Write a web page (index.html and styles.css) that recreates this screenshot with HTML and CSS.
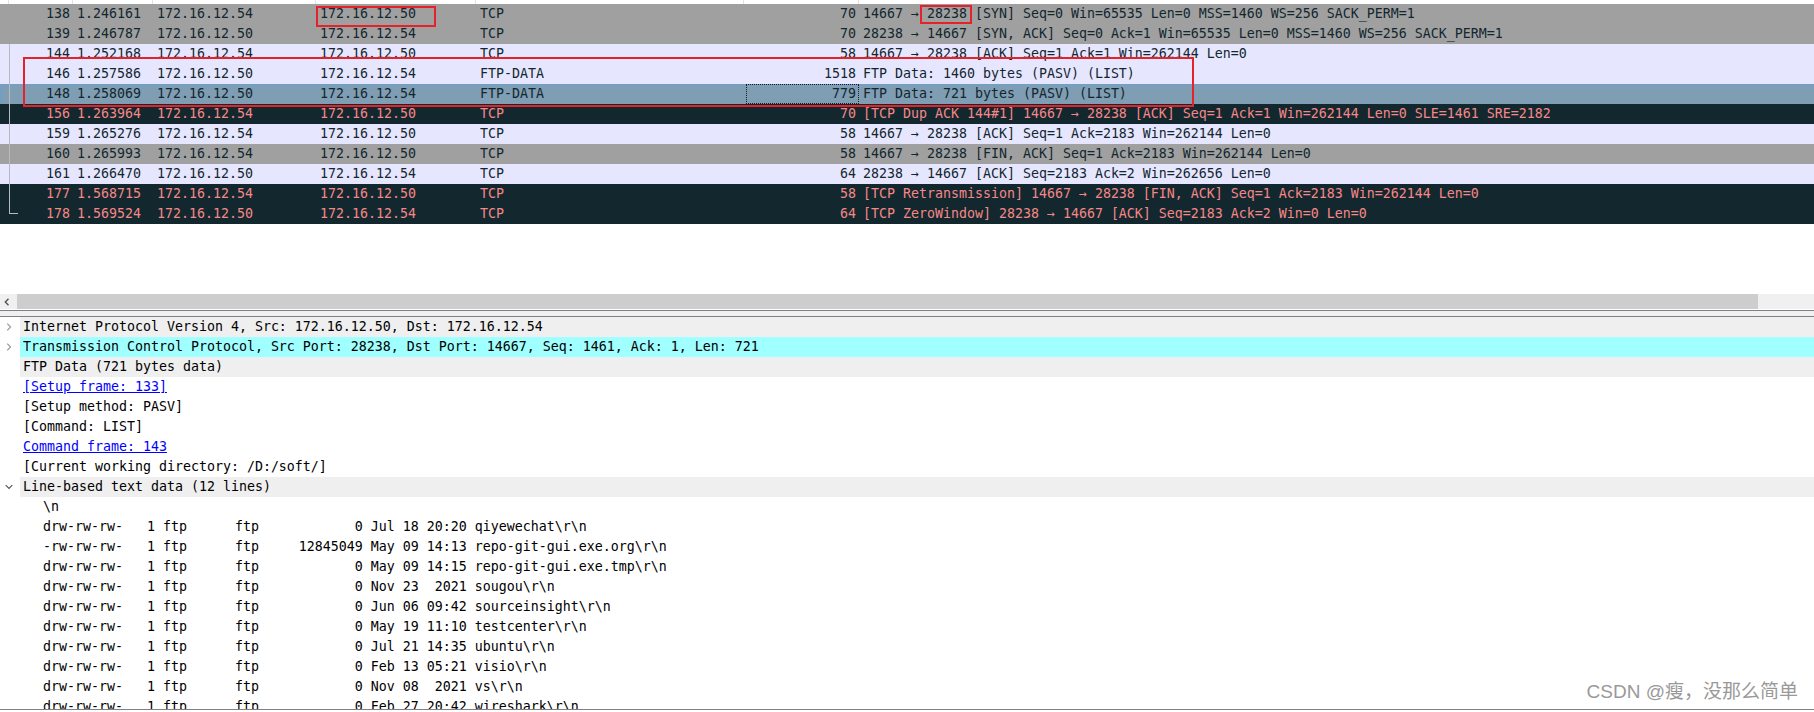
FILE: index.html
```html
<!DOCTYPE html>
<html>
<head>
<meta charset="utf-8">
<link rel="stylesheet" href="styles.css">
</head>
<body>
<div class="page">
  <div class="plist">
    <div class="phead"><span></span><span></span><span></span><span></span><span></span><span></span><span></span><span></span></div>
    <div class="prow gray"><span></span><span class="num">138</span><span>1.246161</span><span>172.16.12.54</span><span>172.16.12.50</span><span>TCP</span><span class="len">70</span><span>14667 → 28238 [SYN] Seq=0 Win=65535 Len=0 MSS=1460 WS=256 SACK_PERM=1</span></div>
    <div class="prow gray"><span></span><span class="num">139</span><span>1.246787</span><span>172.16.12.50</span><span>172.16.12.54</span><span>TCP</span><span class="len">70</span><span>28238 → 14667 [SYN, ACK] Seq=0 Ack=1 Win=65535 Len=0 MSS=1460 WS=256 SACK_PERM=1</span></div>
    <div class="prow lav"><span></span><span class="num">144</span><span>1.252168</span><span>172.16.12.54</span><span>172.16.12.50</span><span>TCP</span><span class="len">58</span><span>14667 → 28238 [ACK] Seq=1 Ack=1 Win=262144 Len=0</span></div>
    <div class="prow lav"><span></span><span class="num">146</span><span>1.257586</span><span>172.16.12.50</span><span>172.16.12.54</span><span>FTP-DATA</span><span class="len">1518</span><span>FTP Data: 1460 bytes (PASV) (LIST)</span></div>
    <div class="prow sel"><span></span><span class="num">148</span><span>1.258069</span><span>172.16.12.50</span><span>172.16.12.54</span><span>FTP-DATA</span><span class="len focus">779</span><span>FTP Data: 721 bytes (PASV) (LIST)</span></div>
    <div class="prow bad"><span></span><span class="num">156</span><span>1.263964</span><span>172.16.12.54</span><span>172.16.12.50</span><span>TCP</span><span class="len">70</span><span>[TCP Dup ACK 144#1] 14667 → 28238 [ACK] Seq=1 Ack=1 Win=262144 Len=0 SLE=1461 SRE=2182</span></div>
    <div class="prow lav"><span></span><span class="num">159</span><span>1.265276</span><span>172.16.12.54</span><span>172.16.12.50</span><span>TCP</span><span class="len">58</span><span>14667 → 28238 [ACK] Seq=1 Ack=2183 Win=262144 Len=0</span></div>
    <div class="prow gray"><span></span><span class="num">160</span><span>1.265993</span><span>172.16.12.54</span><span>172.16.12.50</span><span>TCP</span><span class="len">58</span><span>14667 → 28238 [FIN, ACK] Seq=1 Ack=2183 Win=262144 Len=0</span></div>
    <div class="prow lav"><span></span><span class="num">161</span><span>1.266470</span><span>172.16.12.50</span><span>172.16.12.54</span><span>TCP</span><span class="len">64</span><span>28238 → 14667 [ACK] Seq=2183 Ack=2 Win=262656 Len=0</span></div>
    <div class="prow bad"><span></span><span class="num">177</span><span>1.568715</span><span>172.16.12.54</span><span>172.16.12.50</span><span>TCP</span><span class="len">58</span><span>[TCP Retransmission] 14667 → 28238 [FIN, ACK] Seq=1 Ack=2183 Win=262144 Len=0</span></div>
    <div class="prow bad"><span></span><span class="num">178</span><span>1.569524</span><span>172.16.12.50</span><span>172.16.12.54</span><span>TCP</span><span class="len">64</span><span>[TCP ZeroWindow] 28238 → 14667 [ACK] Seq=2183 Ack=2 Win=0 Len=0</span></div>
    <div class="rel-v"></div>
    <div class="rel-h"></div>
  </div>

  <div class="hscroll">
    <div class="sarrow"><svg width="6" height="8" viewBox="0 0 6 8"><path d="M4.5 0.7 L1.3 4 L4.5 7.3" fill="none" stroke="#555" stroke-width="1.4"/></svg></div>
    <div class="sthumb"></div>
    <div class="strack"></div>
  </div>
  <div class="sgap"></div>
  <div class="split"></div>

  <div class="dpane">
    <div class="drow top"><span class="exp"><svg width="6" height="8" viewBox="0 0 6 8"><path d="M1.3 0.7 L4.5 4 L1.3 7.3" fill="none" stroke="#9a9a9a" stroke-width="1.2"/></svg></span><span class="dtxt">Internet Protocol Version 4, Src: 172.16.12.50, Dst: 172.16.12.54</span></div>
    <div class="drow top cyan"><span class="exp"><svg width="6" height="8" viewBox="0 0 6 8"><path d="M1.3 0.7 L4.5 4 L1.3 7.3" fill="none" stroke="#9a9a9a" stroke-width="1.2"/></svg></span><span class="dtxt">Transmission Control Protocol, Src Port: 28238, Dst Port: 14667, Seq: 1461, Ack: 1, Len: 721</span></div>
    <div class="drow top"><span class="exp"></span><span class="dtxt">FTP Data (721 bytes data)</span></div>
    <div class="drow"><span class="exp"></span><span class="dtxt"><a class="lnk">[Setup frame: 133]</a></span></div>
    <div class="drow"><span class="exp"></span><span class="dtxt">[Setup method: PASV]</span></div>
    <div class="drow"><span class="exp"></span><span class="dtxt">[Command: LIST]</span></div>
    <div class="drow"><span class="exp"></span><span class="dtxt"><a class="lnk">Command frame: 143</a></span></div>
    <div class="drow"><span class="exp"></span><span class="dtxt">[Current working directory: /D:/soft/]</span></div>
    <div class="drow top"><span class="exp"><svg width="8" height="6" viewBox="0 0 8 6"><path d="M0.7 1.2 L4 4.5 L7.3 1.2" fill="none" stroke="#555" stroke-width="1.2"/></svg></span><span class="dtxt">Line-based text data (12 lines)</span></div>
    <div class="drow sub"><span class="exp"></span><span class="dtxt">\n</span></div>
    <div class="drow sub"><span class="exp"></span><span class="dtxt">drw-rw-rw-   1 ftp      ftp            0 Jul 18 20:20 qiyewechat\r\n</span></div>
    <div class="drow sub"><span class="exp"></span><span class="dtxt">-rw-rw-rw-   1 ftp      ftp     12845049 May 09 14:13 repo-git-gui.exe.org\r\n</span></div>
    <div class="drow sub"><span class="exp"></span><span class="dtxt">drw-rw-rw-   1 ftp      ftp            0 May 09 14:15 repo-git-gui.exe.tmp\r\n</span></div>
    <div class="drow sub"><span class="exp"></span><span class="dtxt">drw-rw-rw-   1 ftp      ftp            0 Nov 23  2021 sougou\r\n</span></div>
    <div class="drow sub"><span class="exp"></span><span class="dtxt">drw-rw-rw-   1 ftp      ftp            0 Jun 06 09:42 sourceinsight\r\n</span></div>
    <div class="drow sub"><span class="exp"></span><span class="dtxt">drw-rw-rw-   1 ftp      ftp            0 May 19 11:10 testcenter\r\n</span></div>
    <div class="drow sub"><span class="exp"></span><span class="dtxt">drw-rw-rw-   1 ftp      ftp            0 Jul 21 14:35 ubuntu\r\n</span></div>
    <div class="drow sub"><span class="exp"></span><span class="dtxt">drw-rw-rw-   1 ftp      ftp            0 Feb 13 05:21 visio\r\n</span></div>
    <div class="drow sub"><span class="exp"></span><span class="dtxt">drw-rw-rw-   1 ftp      ftp            0 Nov 08  2021 vs\r\n</span></div>
    <div class="drow sub"><span class="exp"></span><span class="dtxt">drw-rw-rw-   1 ftp      ftp            0 Feb 27 20:42 wireshark\r\n</span></div>
  </div>

  <div class="mark m1"></div>
  <div class="mark m2"></div>
  <div class="mark m3"></div>
  <div class="watermark">CSDN @瘦，没那么简单</div>
</div>
</body>
</html>
```

FILE: styles.css
```css
html, body {
  margin: 0;
  padding: 0;
  background: #ffffff;
}

.page {
  position: relative;
  width: 1814px;
  height: 712px;
  overflow: hidden;
  font-family: "DejaVu Sans Mono", "Liberation Mono", monospace;
  font-size: 13.29px;
  color: #12272e;
}

/* ---------- packet list ---------- */
.plist {
  position: relative;
  height: 294px;
  background: #ffffff;
}

.phead,
.prow {
  display: grid;
  grid-template-columns: 9px 64px 80px 163px 160px 268px 115px 1fr;
}

.phead {
  height: 4px;
}

.phead span {
  border-right: 1px solid #e2e2e2;
}

.phead span:last-child {
  border-right: none;
}

.prow {
  height: 20px;
  line-height: 20px;
  white-space: pre;
}

.prow > span {
  padding: 0 3px 0 4px;
  overflow: hidden;
}

.prow > span:first-child {
  padding: 0;
}

.prow .num,
.prow .len {
  text-align: right;
}

.prow.gray {
  background: #a0a0a0;
  color: #12272e;
}

.prow.lav {
  background: #e7e6ff;
  color: #12272e;
}

.prow.bad {
  background: #12272e;
  color: #f78787;
}

.prow.sel {
  background: #7f9db3;
  color: #12272e;
  box-shadow: inset 0 1px 0 #6a9fd2, inset 1px 0 0 #6a9fd2;
}

.prow .focus {
  margin-left: 2px;
  outline: 1px dotted #1b1b1b;
  outline-offset: -1px;
}

.rel-v {
  position: absolute;
  left: 9px;
  top: 44px;
  width: 1px;
  height: 170px;
  background: #b9b9c2;
}

.rel-h {
  position: absolute;
  left: 9px;
  top: 213px;
  width: 9px;
  height: 1px;
  background: #b9b9c2;
}

/* ---------- horizontal scrollbar ---------- */
.hscroll {
  display: flex;
  height: 15px;
  background: #f0f0f0;
}

.sarrow {
  width: 17px;
  display: flex;
  align-items: center;
  justify-content: center;
  padding-right: 4px;
  box-sizing: border-box;
}

.sarrow svg {
  display: block;
}

.sthumb {
  width: 1741px;
  background: #cdcdcd;
}

.strack {
  flex: 1;
}

.sgap {
  height: 1px;
  background: #ffffff;
}

.split {
  height: 5px;
  background: #f0f0f0;
  border-top: 1px solid #7f7f8b;
  border-bottom: 1px solid #7f7f8b;
}

/* ---------- detail pane ---------- */
.dpane {
  height: 392px;
  overflow: hidden;
  border-bottom: 1px solid #80808a;
  color: #000000;
}

.drow {
  display: flex;
  height: 20px;
  line-height: 20px;
  white-space: pre;
}

.drow .exp {
  width: 20px;
  flex: none;
  display: flex;
  align-items: center;
  justify-content: center;
  padding-right: 3px;
  box-sizing: border-box;
}

.drow .exp svg {
  display: block;
}

.drow .dtxt {
  flex: 1;
  padding-left: 3px;
}

.drow.top .dtxt {
  background: #efefef;
}

.drow.top.cyan .dtxt {
  background: #a0ffff;
}

.drow.sub .dtxt {
  padding-left: 23px;
}

.lnk {
  color: #0000ff;
  text-decoration: underline;
}

/* ---------- annotations ---------- */
.mark {
  position: absolute;
  box-sizing: border-box;
  border: 2px solid #e5212a;
}

.m1 {
  left: 316px;
  top: 6px;
  width: 120px;
  height: 21px;
}

.m2 {
  left: 920px;
  top: 5px;
  width: 52px;
  height: 19px;
}

.m3 {
  left: 23px;
  top: 57px;
  width: 1171px;
  height: 50px;
}

.watermark {
  position: absolute;
  right: 16px;
  top: 680px;
  font-family: "Liberation Sans", "Noto Sans CJK SC", sans-serif;
  font-size: 19px;
  line-height: 24px;
  color: #999999;
  text-shadow: 0 0 2px #ffffff;
  white-space: nowrap;
}
```
